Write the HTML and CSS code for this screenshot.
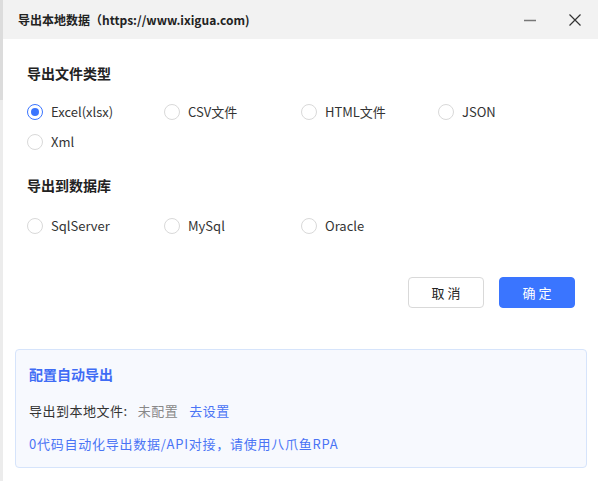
FILE: index.html
```html
<!DOCTYPE html>
<html lang="zh-CN">
<head>
<meta charset="utf-8">
<link rel="stylesheet" href="styles.css">
</head>
<body>
<div class="page">
  <div class="edge"></div>
  <div class="dialog">
    <div class="titlebar">
      <div class="title">导出本地数据（https://www.ixigua.com)</div>
      <div class="win-btns">
        <span class="win-btn"><svg width="14" height="14" viewBox="0 0 14 14"><path d="M1 7.5h12" stroke="#777" stroke-width="1.5"/></svg></span>
        <span class="win-btn"><svg width="14" height="14" viewBox="0 0 14 14"><path d="M1.5 1.5l11 11M12.5 1.5l-11 11" stroke="#333" stroke-width="1.2"/></svg></span>
      </div>
    </div>
    <div class="body">
      <div class="section-title">导出文件类型</div>
      <div class="radio-grid">
        <label class="radio checked"><span class="dot"></span><span>Excel(xlsx)</span></label>
        <label class="radio"><span class="dot"></span><span>CSV文件</span></label>
        <label class="radio"><span class="dot"></span><span>HTML文件</span></label>
        <label class="radio"><span class="dot"></span><span>JSON</span></label>
        <label class="radio"><span class="dot"></span><span>Xml</span></label>
      </div>
      <div class="section-title second">导出到数据库</div>
      <div class="radio-grid second">
        <label class="radio"><span class="dot"></span><span>SqlServer</span></label>
        <label class="radio"><span class="dot"></span><span>MySql</span></label>
        <label class="radio"><span class="dot"></span><span>Oracle</span></label>
      </div>
      <div class="actions">
        <button class="btn">取 消</button>
        <button class="btn primary">确 定</button>
      </div>
      <div class="panel">
        <div class="panel-title">配置自动导出</div>
        <div class="panel-line">导出到本地文件:<span class="muted">未配置</span><span class="link gap">去设置</span></div>
        <div class="panel-line link wide">0代码自动化导出数据/API对接，请使用八爪鱼RPA</div>
      </div>
    </div>
  </div>
</div>
</body>
</html>
```
FILE: styles.css
```css
* { box-sizing: border-box; }
html, body { margin: 0; padding: 0; }
body {
  width: 598px;
  height: 481px;
  overflow: hidden;
  background: #fff;
  font-family: "Noto Sans CJK SC", "Noto Sans", sans-serif;
  font-size: 13px;
  color: #333;
}
.page { display: flex; height: 481px; }
.edge {
  width: 3px;
  flex: none;
  background: linear-gradient(#dcdcdc 0, #dcdcdc 100px, #ececec 100px, #ececec 100%);
}
.dialog { flex: 1; display: flex; flex-direction: column; background: #fff; }
.titlebar {
  height: 39px;
  background: #f2f2f2;
  display: flex;
  align-items: center;
  justify-content: space-between;
  padding-left: 15px;
}
.title { font-weight: bold; font-size: 12px; color: #222; }
.win-btns { display: flex; align-items: center; gap: 31px; padding-right: 16px; }
.win-btn { display: flex; }
.body { padding: 0 12px 0 12px; }
.section-title {
  font-weight: bold;
  font-size: 14px;
  color: #222;
  padding-left: 12px;
  margin-top: 24px;
  line-height: 20px;
}
.section-title.second { margin-top: 23px; }
.radio-grid {
  display: grid;
  grid-template-columns: repeat(4, 137px);
  row-gap: 10px;
  padding-left: 12px;
  margin-top: 19px;
}
.radio-grid.second { margin-top: 21px; }
.radio { display: flex; align-items: center; gap: 8px; line-height: 20px; color: #333; }
.dot {
  width: 16px;
  height: 16px;
  border: 1px solid #d9d9d9;
  border-radius: 50%;
  flex: none;
  display: flex;
  align-items: center;
  justify-content: center;
}
.radio.checked .dot { border-color: #3a75ff; }
.radio.checked .dot::after {
  content: "";
  width: 8px;
  height: 8px;
  border-radius: 50%;
  background: #3a75ff;
}
.actions { display: flex; justify-content: flex-end; gap: 15px; margin-top: 41px; padding-right: 11px; }
.btn {
  width: 76px;
  height: 31px;
  border: 1px solid #d9d9d9;
  border-radius: 4px;
  background: #fff;
  font: inherit;
  font-size: 13px;
  color: #222;
  padding: 0;
}
.btn.primary { background: #3a75ff; border-color: #3a75ff; color: #fff; }
.panel {
  margin-top: 41px;
  margin-right: -1px;
  border: 1px solid #d6e4fb;
  border-radius: 4px;
  background: #f7f9fe;
  padding: 14px 14px 14px 13px;
  height: 119px;
}
.panel-title { font-weight: bold; font-size: 14px; color: #3f6cf5; line-height: 20px; }
.panel-line { line-height: 20px; margin-top: 17px; color: #333; letter-spacing: 0.5px; }
.panel-line + .panel-line { margin-top: 13px; }
.panel-line.wide { letter-spacing: 0.75px; }
.muted { color: #888; margin-left: 10px; }
.gap { margin-left: 11px; }
.link { color: #4a74f5; }
```
